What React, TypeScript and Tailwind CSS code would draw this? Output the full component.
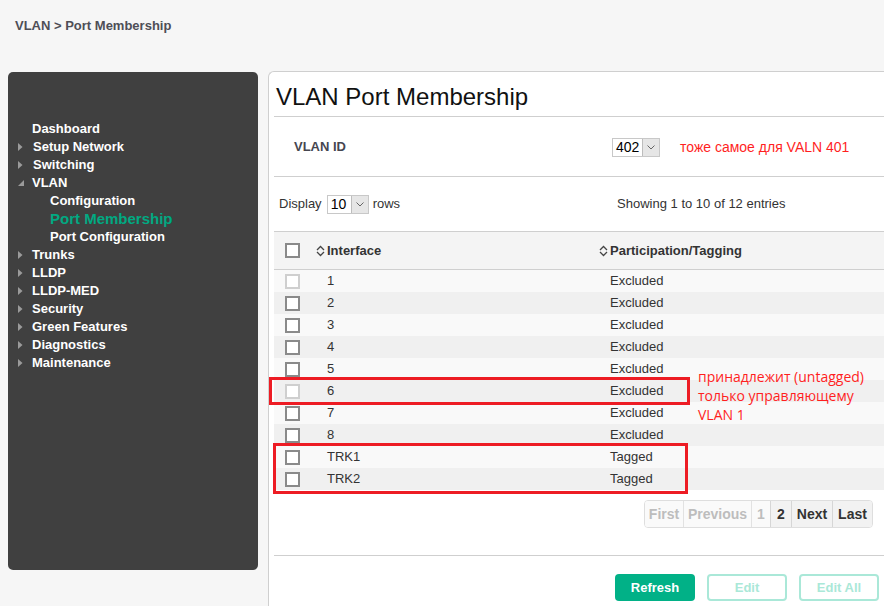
import React from "react";

const menu = [
  { label: "Dashboard", arrow: "none" },
  { label: "Setup Network", arrow: "right" },
  { label: "Switching", arrow: "right" },
  { label: "VLAN", arrow: "down" },
];

const menuAfter = ["Trunks", "LLDP", "LLDP-MED", "Security", "Green Features", "Diagnostics", "Maintenance"];

const rows = [
  { name: "1", value: "Excluded", disabled: true },
  { name: "2", value: "Excluded" },
  { name: "3", value: "Excluded" },
  { name: "4", value: "Excluded" },
  { name: "5", value: "Excluded" },
  { name: "6", value: "Excluded", disabled: true },
  { name: "7", value: "Excluded" },
  { name: "8", value: "Excluded" },
  { name: "TRK1", value: "Tagged" },
  { name: "TRK2", value: "Tagged" },
];

const Arrow = ({ dir }: { dir: string }) => {
  if (dir === "none") return <span className="w-[24px]" />;
  return (
    <span className="w-[24px] flex items-center pl-[10px]">
      {dir === "right" ? (
        <svg width="5" height="8" viewBox="0 0 5 8">
          <path d="M0 0 L4.5 4 L0 8 Z" fill="#9a9a9a" />
        </svg>
      ) : (
        <svg width="6" height="6" viewBox="0 0 6 6">
          <path d="M6 0 L6 6 L0 6 Z" fill="#9a9a9a" />
        </svg>
      )}
    </span>
  );
};

const SortIcon = () => (
  <svg width="9" height="12" viewBox="0 0 9 12" className="mr-[2px]">
    <path d="M1 5 L4.5 1.5 L8 5" fill="none" stroke="#444" strokeWidth="1.3" />
    <path d="M1 7 L4.5 10.5 L8 7" fill="none" stroke="#444" strokeWidth="1.3" />
  </svg>
);

const Checkbox = ({ disabled }: { disabled?: boolean }) => (
  <span
    className={
      "block w-[15px] h-[15px] border-2 bg-white " +
      (disabled ? "border-[#cfcfcf]" : "border-[#8a8a8a]")
    }
  />
);

const SmallSelect = ({ value, width }: { value: string; width: string }) => (
  <span className={"inline-flex h-[19px] border border-[#c8c8c8] bg-white " + width}>
    <span className="flex-1 flex items-center pl-[3px] text-[14px] text-black">{value}</span>
    <span className="w-[17px] flex items-center justify-center bg-[#e6e6e6] border-l border-[#bdbdbd]">
      <svg width="8" height="5" viewBox="0 0 8 5">
        <path d="M0.5 0.5 L4 4 L7.5 0.5" fill="none" stroke="#666" strokeWidth="1" />
      </svg>
    </span>
  </span>
);

export default function App() {
  return (
    <div
      className="relative w-[884px] h-[606px] overflow-hidden bg-[#f6f6f6]"
      style={{ fontFamily: '"Liberation Sans", Arial, sans-serif' }}
    >
      <div className="h-[71px] pl-[15px] pt-[16px] text-[13px] font-bold text-[#4e4e56]">
        VLAN &gt; Port Membership
      </div>

      <div className="flex items-start">
        {/* Sidebar */}
        <div className="ml-[8px] mt-[1px] w-[250px] h-[498px] rounded-[5px] bg-[#404040] pt-[48px]">
          {menu.map(m => (
            <div key={m.label} className="flex items-center h-[18px] text-[13px] font-bold text-white">
              <Arrow dir={m.arrow} />
              <span className={m.arrow === "right" ? "ml-[1px]" : ""}>{m.label}</span>
            </div>
          ))}
          <div className="flex items-center h-[18px] pl-[42px] text-[13px] font-bold text-white">Configuration</div>
          <div className="flex items-center h-[18px] pl-[42px] text-[15px] font-bold text-[#01a982]">Port Membership</div>
          <div className="flex items-center h-[18px] pl-[42px] text-[13px] font-bold text-white">Port Configuration</div>
          {menuAfter.map(label => (
            <div key={label} className="flex items-center h-[18px] text-[13px] font-bold text-white">
              <Arrow dir="right" />
              <span>{label}</span>
            </div>
          ))}
        </div>

        {/* Main card */}
        <div className="ml-[10px] flex-1 h-[540px] bg-white border-l border-t border-[#cfcfcf] rounded-tl-[6px] pl-[5px]">
          <div className="h-[45px] border-b border-[#cfcfcf] pl-[2px] pt-[11px] text-[24px] leading-[28px] text-[#111]">
            VLAN Port Membership
          </div>

          <div className="h-[60px] border-b border-[#cfcfcf] flex items-center pt-[1px]">
            <span className="ml-[20px] w-[318px] text-[13px] font-bold text-[#464650]">VLAN ID</span>
            <SmallSelect value="402" width="w-[48px]" />
            <span className="ml-[20px] text-[14px] text-[#ff1f1f]">тоже самое для VALN 401</span>
          </div>

          <div className="h-[54px] flex items-center text-[13px] text-[#333]">
            <span className="ml-[5px] mr-[5px]">Display</span>
            <SmallSelect value="10" width="w-[42px]" />
            <span className="ml-[4px]">rows</span>
            <span className="ml-[217px]">Showing 1 to 10 of 12 entries</span>
          </div>

          {/* Table */}
          <div className="grid grid-cols-[42px_283px_1fr] h-[39px] items-center bg-[#f4f4f4] border-t border-b border-[#cfcfcf] text-[13px] font-bold text-[#333]">
            <span className="pl-[11px]">
              <Checkbox />
            </span>
            <span className="flex items-center">
              <SortIcon />
              Interface
            </span>
            <span className="flex items-center">
              <SortIcon />
              Participation/Tagging
            </span>
          </div>
          {rows.map((r, i) => (
            <div
              key={r.name}
              className={
                "grid grid-cols-[42px_283px_1fr] h-[22px] items-center text-[13px] text-[#333] " +
                (i % 2 === 0 ? "bg-[#f9f9f9]" : "bg-[#f0f0f0]")
              }
            >
              <span className="pl-[11px]">
                <Checkbox disabled={r.disabled} />
              </span>
              <span className="pl-[11px]">{r.name}</span>
              <span className="pl-[11px]">{r.value}</span>
            </div>
          ))}

          {/* Pagination */}
          <div className="mt-[10px] ml-[370px] flex h-[28px] w-[229px] rounded-[4px] border border-[#dedede] overflow-hidden text-[14px] font-bold">
            <span className="w-[39px] flex items-center justify-center bg-[#fafafa] text-[#bdbdbd] border-r border-[#e2e2e2]">First</span>
            <span className="w-[68px] flex items-center justify-center bg-[#fafafa] text-[#bdbdbd] border-r border-[#e2e2e2]">Previous</span>
            <span className="w-[19px] flex items-center justify-center bg-[#fafafa] text-[#bdbdbd] border-r border-[#d6d6d6]">1</span>
            <span className="w-[21px] flex items-center justify-center bg-[#f2f2f2] text-[#333] border-r border-[#d6d6d6]">2</span>
            <span className="w-[41px] flex items-center justify-center bg-[#f2f2f2] text-[#333] border-r border-[#d6d6d6]">Next</span>
            <span className="flex-1 flex items-center justify-center bg-[#f2f2f2] text-[#333]">Last</span>
          </div>

          <div className="mt-[27px] border-t border-[#cfcfcf]" />

          <div className="mt-[18px] ml-[341px] flex gap-[12px] text-[13px] font-bold">
            <button className="w-[80px] h-[27px] rounded-[4px] bg-[#01b187] text-white">Refresh</button>
            <button className="w-[80px] h-[27px] rounded-[4px] border-2 border-[#aae8d8] bg-white text-[#aae8d8]">Edit</button>
            <button className="w-[80px] h-[27px] rounded-[4px] border-2 border-[#aae8d8] bg-white text-[#aae8d8]">Edit All</button>
          </div>
        </div>
      </div>

      {/* Annotations */}
      <div className="absolute left-[269px] top-[377px] w-[421px] h-[28px] border-[3px] border-[#ed1c24]" />
      <div className="absolute left-[273px] top-[443px] w-[415px] h-[51px] border-[3px] border-[#ed1c24]" />
      <div
        className="absolute left-[698px] top-[367px] text-[14px] leading-[19px] text-[#ff1f1f]"
        style={{ fontFamily: '"Open Sans", "Noto Sans", sans-serif' }}
      >
        принадлежит (untagged)
        <br />
        только управляющему
        <br />
        VLAN 1
      </div>
    </div>
  );
}
